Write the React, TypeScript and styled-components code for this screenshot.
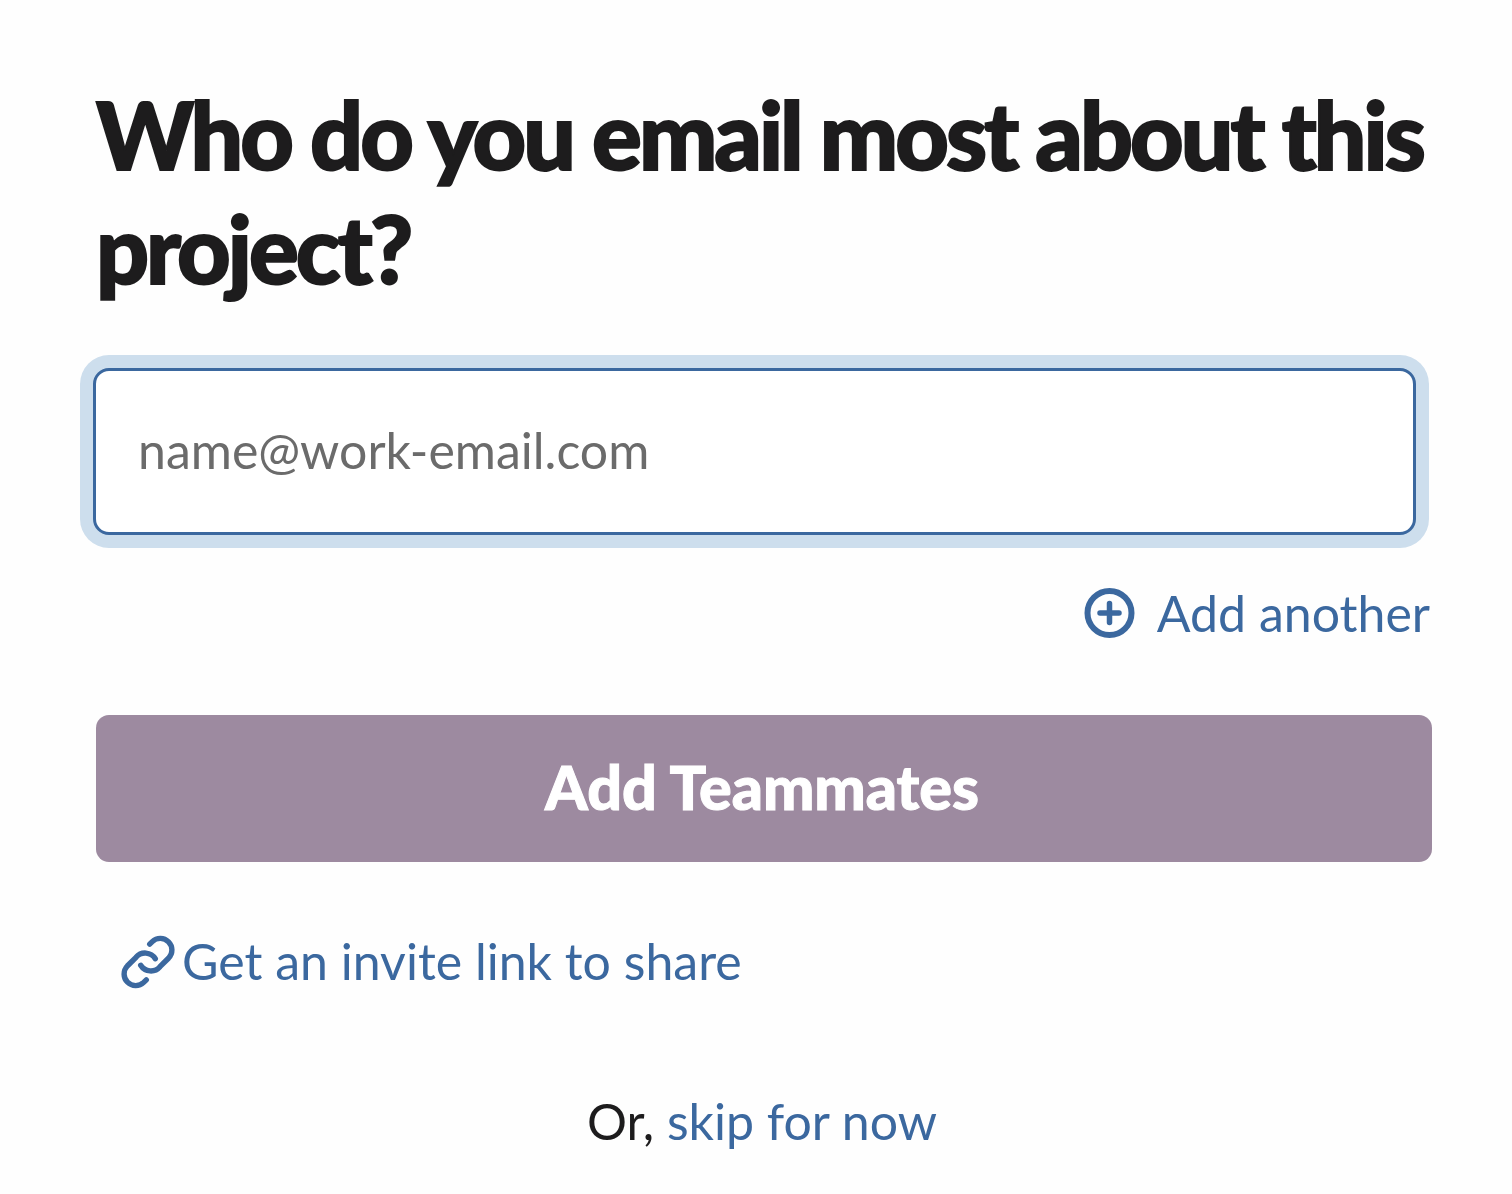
import React from "react";
import styled, { createGlobalStyle } from "styled-components";

const colors = { ink: "#1d1c1d", link: "#3b689f", halo: "#cddeed", muted: "#6b6b6b", plum: "#9d8aa0" };

const GlobalStyle = createGlobalStyle`
  *, *::before, *::after { box-sizing: border-box; }
  body { margin: 0; background: #fefefe; color: ${colors.ink}; font-family: Lato, sans-serif; }
  button, input { font: inherit; }
`;

const Page = styled.main`
  display: flex;
  flex-direction: column;
  padding: 77px 80px 40px 96px;
`;

const Title = styled.h1`
  margin: 0;
  font-size: 93px;
  line-height: 114px;
  font-weight: 900;
  letter-spacing: -3px;
  -webkit-text-stroke: 2px currentColor;
`;

const EmailInput = styled.input`
  width: calc(100% - 13px);
  height: 167px;
  margin: 63px 0 0 -3px;
  padding: 0 42px 4px;
  border: 3px solid ${colors.link};
  border-radius: 16px;
  outline: none;
  box-shadow: 0 0 0 13px ${colors.halo};
  background: #fff;
  color: ${colors.ink};
  font-size: 50px;
  &::placeholder { color: ${colors.muted}; opacity: 1; }
`;

const TextButton = styled.button<{ $gap: number }>`
  display: flex;
  align-items: center;
  gap: ${(p) => p.$gap}px;
  padding: 0;
  border: 0;
  background: none;
  color: ${colors.link};
  font-size: 50px;
  line-height: 60px;
  cursor: pointer;
`;

const AddRow = styled.div`
  display: flex;
  justify-content: flex-end;
  margin-top: 48px;
  padding-right: 2px;
`;

const SubmitButton = styled.button`
  height: 147px;
  margin-top: 72px;
  padding: 0 4px 4px 0;
  border: 0;
  border-radius: 13px;
  background: ${colors.plum};
  color: #fff;
  font-size: 61px;
  font-weight: 900;
  -webkit-text-stroke: 1px currentColor;
  cursor: pointer;
`;

const InviteRow = styled.div`
  display: flex;
  margin-top: 69px;
  padding-left: 24px;
`;

const SkipLine = styled.p`
  margin: 100px 0 0;
  padding-right: 4px;
  font-size: 50px;
  line-height: 60px;
  text-align: center;
`;

const Link = styled.a`
  color: ${colors.link};
  text-decoration: none;
`;

const PlusIcon = () => (
  <svg width="52" height="52" viewBox="0 0 52 52" fill="none" stroke="currentColor" strokeWidth="6" aria-hidden="true">
    <circle cx="25.5" cy="26" r="22" />
    <path d="M25.5 16.5v19M16 26h19" strokeWidth="5.5" strokeLinecap="round" />
  </svg>
);

const LinkIcon = () => (
  <svg width="56" height="56" viewBox="0 0 56 56" fill="none" stroke="currentColor" strokeWidth="5.4" strokeLinecap="round" overflow="visible" aria-hidden="true">
    <path d="M29.700 11.200 32.300 8.600A11.600 11.600 0 0 1 48.700 25L40 33.700A12 12 0 0 1 20.700 32.300" />
    <path d="M26.300 46.800 23.700 49.400A11.600 11.600 0 0 1 7.300 33L16 24.300A12 12 0 0 1 35.300 25.700" />
  </svg>
);

export default function App() {
  return (
    <>
      <GlobalStyle />
      <Page>
        <Title>Who do you email most about this project?</Title>
        <EmailInput type="email" placeholder="name@work-email.com" aria-label="Work email" />
        <AddRow>
          <TextButton type="button" $gap={21}><PlusIcon />Add another</TextButton>
        </AddRow>
        <SubmitButton type="button">Add Teammates</SubmitButton>
        <InviteRow>
          <TextButton type="button" $gap={6}><LinkIcon />Get an invite link to share</TextButton>
        </InviteRow>
        <SkipLine>Or, <Link href="#skip">skip for now</Link></SkipLine>
      </Page>
    </>
  );
}
